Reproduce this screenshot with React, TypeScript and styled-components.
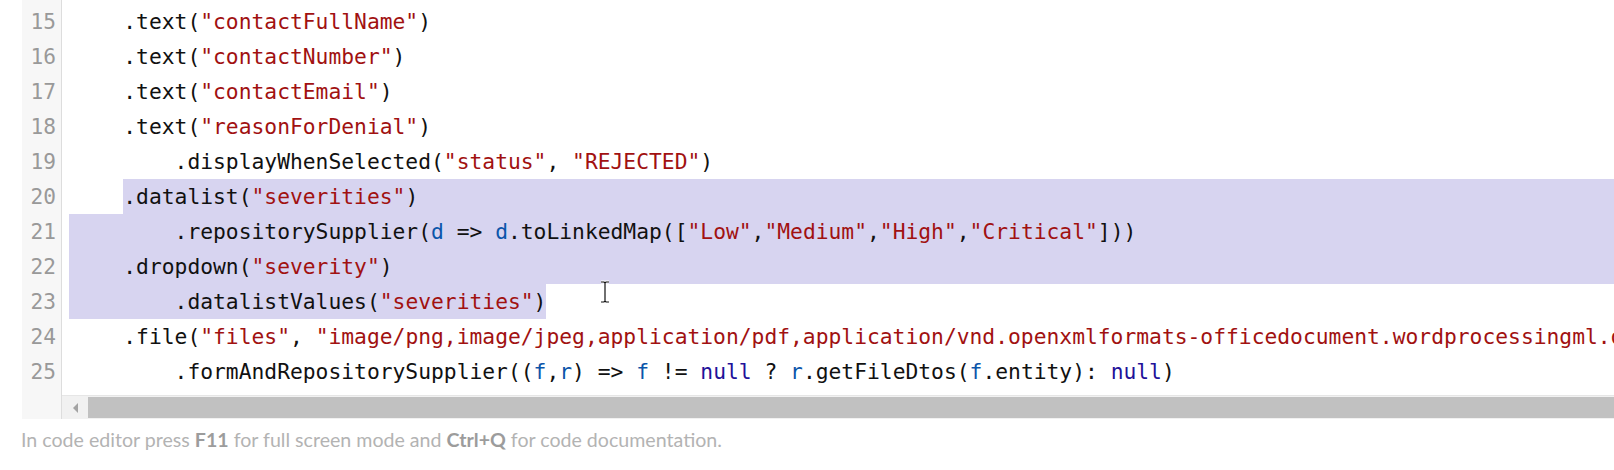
import React from "react";
import styled, { createGlobalStyle } from "styled-components";

const Global = createGlobalStyle`
  html, body { margin: 0; padding: 0; background: #fff; }
  body { width: 1614px; height: 470px; overflow: hidden; }
`;

type Tok = [string, string];
type LineDef = { n: number; toks: Tok[]; selFrom?: number; selTo?: number; padSel?: boolean };

const LINES: LineDef[] = [
  { n: 15, toks: [["p", '    .text('], ["s", '"contactFullName"'], ["p", ")"]] },
  { n: 16, toks: [["p", '    .text('], ["s", '"contactNumber"'], ["p", ")"]] },
  { n: 17, toks: [["p", '    .text('], ["s", '"contactEmail"'], ["p", ")"]] },
  { n: 18, toks: [["p", '    .text('], ["s", '"reasonForDenial"'], ["p", ")"]] },
  {
    n: 19,
    toks: [["p", "        .displayWhenSelected("], ["s", '"status"'], ["p", ", "], ["s", '"REJECTED"'], ["p", ")"]],
  },
  { n: 20, toks: [["p", "    .datalist("], ["s", '"severities"'], ["p", ")"]], selFrom: 4, selTo: Infinity },
  {
    n: 21,
    toks: [
      ["p", "        .repositorySupplier("],
      ["v", "d"],
      ["p", " => "],
      ["v", "d"],
      ["p", ".toLinkedMap(["],
      ["s", '"Low"'],
      ["p", ","],
      ["s", '"Medium"'],
      ["p", ","],
      ["s", '"High"'],
      ["p", ","],
      ["s", '"Critical"'],
      ["p", "]))"],
    ],
    selFrom: 0,
    selTo: Infinity,
    padSel: true,
  },
  { n: 22, toks: [["p", "    .dropdown("], ["s", '"severity"'], ["p", ")"]], selFrom: 0, selTo: Infinity, padSel: true },
  { n: 23, toks: [["p", "        .datalistValues("], ["s", '"severities"'], ["p", ")"]], selFrom: 0, selTo: 37, padSel: true },
  {
    n: 24,
    toks: [
      ["p", "    .file("],
      ["s", '"files"'],
      ["p", ", "],
      ["s", '"image/png,image/jpeg,application/pdf,application/vnd.openxmlformats-officedocument.wordprocessingml.document"'],
      ["p", ")"],
    ],
  },
  {
    n: 25,
    toks: [
      ["p", "        .formAndRepositorySupplier(("],
      ["v", "f"],
      ["p", ","],
      ["v", "r"],
      ["p", ") => "],
      ["v", "f"],
      ["p", " != "],
      ["a", "null"],
      ["p", " ? "],
      ["v", "r"],
      ["p", ".getFileDtos("],
      ["v", "f"],
      ["p", ".entity): "],
      ["a", "null"],
      ["p", ")"],
    ],
  },
];

const MONO = `"DejaVu Sans Mono", "Liberation Mono", monospace`;
const LINE_H = 35;
const SEL = "#d7d4f0";
const CODE_SIZE = "21.3px";

const Editor = styled.div`
  margin-left: 22px;
  height: 419px;
  display: flex;
  background: #fff;
`;

const Gutter = styled.div`
  width: 40px;
  flex: none;
  background: #f7f7f7;
  border-right: 1px solid #dddddd;
  padding-top: 4px;
  box-sizing: border-box;
`;

const LineNo = styled.div`
  height: ${LINE_H}px;
  line-height: ${LINE_H}px;
  text-align: right;
  padding-right: 5px;
  font-family: ${MONO};
  font-size: 21.16px;
  color: #999999;
  white-space: pre;
`;

const Main = styled.div`
  flex: 1;
  min-width: 0;
  display: flex;
  flex-direction: column;
`;

const CodeArea = styled.div`
  position: relative;
  height: 395px;
  padding-top: 4px;
  box-sizing: border-box;
  overflow: hidden;
`;

const Line = styled.div`
  display: flex;
  height: ${LINE_H}px;
  line-height: ${LINE_H}px;
  margin-left: 7px;
  font-family: ${MONO};
  font-size: ${CODE_SIZE};
  white-space: pre;
  color: #111;
`;

const Pad = styled.span<{ $sel?: boolean }>`
  flex: none;
  width: 3px;
  background: ${(p) => (p.$sel ? SEL : "transparent")};
`;

const Tail = styled.span<{ $sel?: boolean }>`
  flex: 1 0 0;
  background: ${(p) => (p.$sel ? SEL : "transparent")};
`;

const COLORS: Record<string, string> = {
  p: "#111111",
  s: "#a11111",
  v: "#0b55aa",
  a: "#221199",
};

const Tk = styled.span<{ $t: string; $sel?: boolean }>`
  flex: none;
  color: ${(p) => COLORS[p.$t]};
  background: ${(p) => (p.$sel ? SEL : "transparent")};
`;

const Cursor = styled.svg`
  position: absolute;
  left: 537px;
  top: 280px;
  pointer-events: none;
`;

const ScrollRow = styled.div`
  height: 24px;
  display: flex;
  align-items: stretch;
  background: #f1f1f1;
  border-top: 1px solid #e6e6e6;
  box-sizing: border-box;
`;

const ArrowBtn = styled.div`
  width: 26px;
  flex: none;
  display: flex;
  align-items: center;
  justify-content: center;
`;

const Arrow = styled.span`
  width: 0;
  height: 0;
  border-top: 5px solid transparent;
  border-bottom: 5px solid transparent;
  border-right: 5px solid #a3a3a3;
`;

const Thumb = styled.div`
  flex: 1;
  margin: 1px 0 1px 0;
  background: #c1c1c1;
`;

const Footer = styled.div`
  margin: 9px 0 0 21px;
  font-family: Lato, "Open Sans", sans-serif;
  font-size: 19.6px;
  line-height: 24px;
  color: #b3b3b3;
  white-space: nowrap;
`;

const Key = styled.b`
  font-weight: 700;
  color: #9c9c9c;
`;

function renderLine(l: LineDef) {
  const from = l.selFrom ?? -1;
  const to = l.selTo ?? -1;
  const out: React.ReactNode[] = [];
  let col = 0;
  let key = 0;
  const inSel = (c: number) => from >= 0 && c >= from && c < to;
  for (const [t, text] of l.toks) {
    let start = 0;
    for (let i = 1; i <= text.length; i++) {
      const boundary = i === text.length || inSel(col + i) !== inSel(col + start);
      if (boundary) {
        out.push(
          <Tk key={key++} $t={t} $sel={inSel(col + start)}>
            {text.slice(start, i)}
          </Tk>
        );
        start = i;
      }
    }
    col += text.length;
  }
  return (
    <Line key={l.n}>
      <Pad $sel={l.padSel} />
      {out}
      <Tail $sel={to === Infinity} />
    </Line>
  );
}

export default function App() {
  return (
    <>
      <Global />
      <Editor>
        <Gutter>
          {LINES.map((l) => (
            <LineNo key={l.n}>{l.n}</LineNo>
          ))}
        </Gutter>
        <Main>
          <CodeArea>
            {LINES.map(renderLine)}
            <Cursor width="12" height="24" viewBox="0 0 12 24">
              <path
                d="M2 2 H5 L6 3 L7 2 H10 M6 3 V21 M2 22 H5 L6 21 L7 22 H10"
                fill="none"
                stroke="#fff"
                strokeWidth="3"
              />
              <path
                d="M2 2 H5 L6 3 L7 2 H10 M6 3 V21 M2 22 H5 L6 21 L7 22 H10"
                fill="none"
                stroke="#111"
                strokeWidth="1.2"
              />
            </Cursor>
          </CodeArea>
          <ScrollRow>
            <ArrowBtn>
              <Arrow />
            </ArrowBtn>
            <Thumb />
          </ScrollRow>
        </Main>
      </Editor>
      <Footer>
        In code editor press <Key>F11</Key> for full screen mode and <Key>Ctrl+Q</Key> for code documentation.
      </Footer>
    </>
  );
}
